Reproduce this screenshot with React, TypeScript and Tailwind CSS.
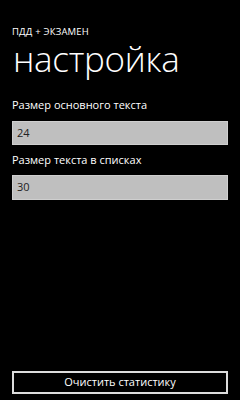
export default function App() {
  return (
    <div className="flex h-[400px] w-[240px] flex-col bg-black px-3 text-white" style={{ fontFamily: '"Open Sans", "Noto Sans", sans-serif' }}>
      <p className="mt-[26px] text-[9.5px] leading-[12px] tracking-[0.2px]">ПДД + ЭКЗАМЕН</p>
      <h1 className="ml-[1px] mt-[1px] text-[35px] font-light leading-[40px] tracking-[-0.3px]">настройка</h1>

      <label className="mt-[19px] text-[11px] leading-[14px]">Размер основного текста</label>
      <div className="mt-[9px] flex h-[24px] items-center border border-[#cfcfcf] bg-[#bfbfbf] px-[4px] text-[11px] text-[#222]">24</div>

      <label className="mt-[8px] text-[11px] leading-[14px]">Размер текста в списках</label>
      <div className="mt-[8px] flex h-[25px] items-center border border-[#cfcfcf] bg-[#bfbfbf] px-[4px] text-[11px] text-[#222]">30</div>

      <button className="mb-[6px] mt-auto flex h-[23px] items-center justify-center border-2 border-[#dcdcdc] text-[11px] text-white">
        Очистить статистику
      </button>
    </div>
  );
}
